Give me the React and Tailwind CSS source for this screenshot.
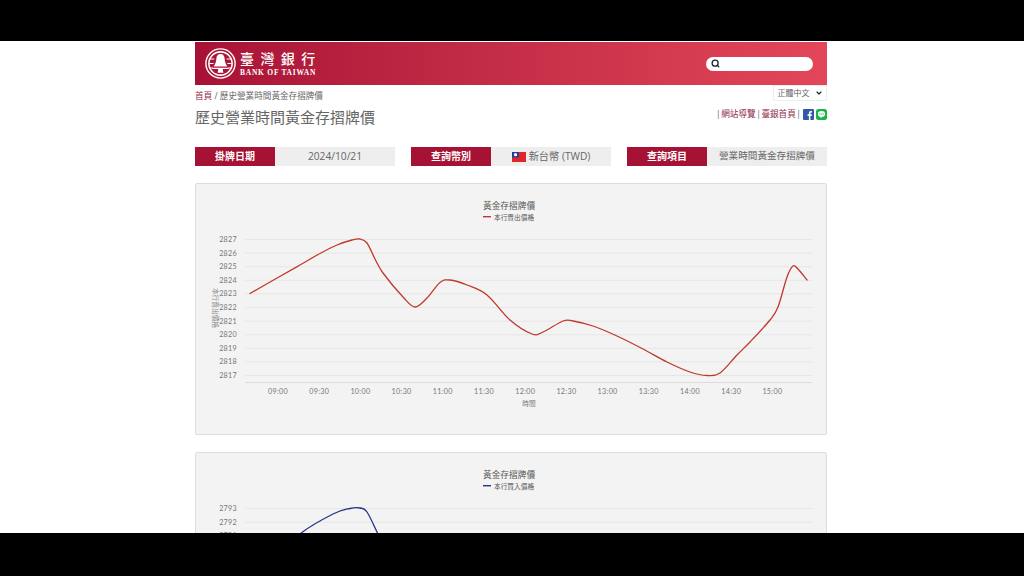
import { Search, ChevronDown } from 'lucide-react';

const yTicks1 = [2827, 2826, 2825, 2824, 2823, 2822, 2821, 2820, 2819, 2818, 2817];
const yTicks2 = [2793, 2792, 2791];
const xTicks = ['09:00', '09:30', '10:00', '10:30', '11:00', '11:30', '12:00', '12:30', '13:00', '13:30', '14:00', '14:30', '15:00'];

// traced from the picture, page coords minus the card origin (195, 183)
const sellLine = [
  [55, 110.5], [83, 94.5], [105, 82], [125, 70.5], [142, 62], [157, 57], [165, 56], [172, 60], [180, 76], [188, 90],
  [208, 114], [220, 124], [232, 115], [245, 99.5], [255, 97], [272, 102], [292, 112], [315, 137], [337, 151],
  [348, 149], [368, 138], [378, 138], [398, 143], [422, 153], [448, 166], [472, 179], [495, 189], [512, 192.5],
  [525, 190], [542, 172], [555, 159], [575, 137], [583, 124], [592, 94], [598, 83], [603, 86], [612, 97],
];
const buyLine = [
  [55, 126], [83, 108], [105, 82], [138, 62], [155, 56.5], [165, 56], [172, 60], [183, 82], [195, 106],
  [215, 125], [232, 116], [250, 100],
];

function smooth(pts) {
  let d = `M${pts[0][0]} ${pts[0][1]}`;
  for (let i = 0; i < pts.length - 1; i++) {
    const p0 = pts[i - 1] || pts[i];
    const p1 = pts[i];
    const p2 = pts[i + 1];
    const p3 = pts[i + 2] || p2;
    const c1x = p1[0] + (p2[0] - p0[0]) / 6;
    const c1y = p1[1] + (p2[1] - p0[1]) / 6;
    const c2x = p2[0] - (p3[0] - p1[0]) / 6;
    const c2y = p2[1] - (p3[1] - p1[1]) / 6;
    d += ` C${c1x} ${c1y} ${c2x} ${c2y} ${p2[0]} ${p2[1]}`;
  }
  return d;
}

function Chart({ legend, color, ticks, line, axis }) {
  return (
    <div className="h-[252px] rounded-[2px] border border-[#dddddd] bg-[#f3f3f3] shrink-0">
      <svg width="630" height="250" viewBox="1 1 630 250" className="block" style={{ fontFamily: '"Noto Sans CJK TC", sans-serif' }}>
        <text x="314" y="26" textAnchor="middle" fontSize="8.7" fill="#555">黃金存摺牌價</text>
        <rect x="288" y="33" width="8" height="1.4" fill={color} />
        <text x="299" y="36.5" fontSize="6.7" fill="#555">{legend}</text>

        {ticks.map((t, i) => {
          const y = 56.5 + i * 13.6;
          return (
            <g key={t}>
              <rect x="50" y={y - 0.5} width="567" height="1" fill="#e6e6e6" />
              <text x="42" y={y + 2.5} textAnchor="end" fontSize="7.2" letterSpacing="0.3" fill="#777" style={{ fontFamily: 'Lato, sans-serif' }}>{t}</text>
            </g>
          );
        })}

        {axis && (
          <g>
            <rect x="50" y="199" width="567" height="1" fill="#dcdcdc" />
            {xTicks.map((t, i) => (
              <text key={t} x={83 + i * 41.2} y="211" textAnchor="middle" fontSize="7.2" letterSpacing="0.3" fill="#777" style={{ fontFamily: 'Lato, sans-serif' }}>{t}</text>
            ))}
            <text x="334" y="223" textAnchor="middle" fontSize="6.7" fill="#777">時間</text>
            <text transform="translate(18 125) rotate(90)" textAnchor="middle" fontSize="6.7" fill="#888">{legend}</text>
          </g>
        )}

        <path d={smooth(line)} fill="none" stroke={color} strokeWidth="1.3" strokeLinejoin="round" strokeLinecap="round" />
      </svg>
    </div>
  );
}

function BankLogo() {
  return (
    <svg width="31" height="31" viewBox="0 0 31 31" className="shrink-0">
      <circle cx="15.5" cy="15.5" r="14.6" fill="none" stroke="#fff" strokeWidth="1.4" />
      <circle cx="15.5" cy="15.5" r="11.6" fill="none" stroke="#fff" strokeWidth="1.6" />
      <path d="M15.5 6c2.6 0 3.9 1.7 4.1 4.2.2 3 .9 5.7 2.7 8.3H8.7c1.8-2.6 2.5-5.3 2.7-8.3C11.6 7.7 12.9 6 15.5 6z" fill="#fff" />
      <path d="M7.2 19.7h16.6v1.4H7.2zM13.3 21.1h4.4l.7 3.6h-5.8z" fill="#fff" />
      <path d="M4.8 11h4.6M4.6 15.5h4M4.8 20h3M21.6 11h4.6M22.4 15.5h4M23.2 20h3" stroke="#fff" strokeWidth="1.1" fill="none" />
    </svg>
  );
}

function Flag() {
  return (
    <svg width="14" height="10" viewBox="0 0 14 10" className="shrink-0">
      <rect width="14" height="10" fill="#e0252b" />
      <rect width="7" height="5.4" fill="#1f3f9a" />
      <circle cx="3.5" cy="2.7" r="1.6" fill="#fff" />
    </svg>
  );
}

function Field({ label, children }) {
  return (
    <div className="flex h-[19px]">
      <div className="flex w-20 items-center justify-center bg-[#a51234] text-[10px] font-bold text-white">{label}</div>
      <div className="flex flex-1 items-center justify-center gap-[2px] bg-[#eeeeee] text-[10.2px] text-[#666]">{children}</div>
    </div>
  );
}

export default function App() {
  return (
    <div className="flex h-[576px] w-[1024px] flex-col overflow-hidden bg-black" style={{ fontFamily: '"Open Sans", "Noto Sans CJK TC", sans-serif' }}>
      <div className="h-[41px] shrink-0 bg-black" />

      <main className="min-h-0 flex-1 overflow-hidden bg-white">
        <div className="ml-[195px] w-[632px] pt-px">
          <header className="flex h-[43px] items-center justify-between bg-linear-to-r from-[#a81136] to-[#e34659] pl-[10px] pr-[14px]">
            <div className="flex items-center gap-[4px]">
              <BankLogo />
              <div className="text-white">
                <div className="whitespace-nowrap text-[14px] font-medium leading-[19px] tracking-[6.4px]" style={{ fontFamily: '"Noto Sans CJK TC", sans-serif' }}>臺灣銀行</div>
                <div className="whitespace-nowrap text-[7.5px] font-bold leading-[10px] tracking-[0.75px]" style={{ fontFamily: '"Liberation Serif", serif' }}>BANK OF TAIWAN</div>
              </div>
            </div>
            <div className="flex h-[14px] w-[107px] items-center rounded-full bg-white pl-[5px]">
              <Search size={9} strokeWidth={3.5} className="text-[#1a2530]" />
            </div>
          </header>

          <div className="flex items-start justify-between">
            <div className="pt-[5px] text-[8.6px] leading-[12px] text-[#666]">
              <span className="text-[#8e2b47]">首頁</span> / 歷史營業時間黃金存摺牌價
            </div>
            <div className="flex h-[16px] w-[54px] items-center justify-center gap-[5px] border border-[#eee] bg-white text-[8px] text-[#666]">
              正體中文
              <ChevronDown size={8} strokeWidth={3.5} className="text-[#222]" />
            </div>
          </div>

          <div className="flex items-start justify-between">
            <h1 className="mt-[4px] text-[15px] font-normal leading-[22px] text-[#666]">歷史營業時間黃金存摺牌價</h1>
            <div className="mt-[6px] flex items-center text-[8.6px] leading-[12px] text-[#8e2b47]">
              <span className="text-[#666]">|</span>
              <span className="mx-[0.5px]">網站導覽</span>
              <span className="text-[#666]">|</span>
              <span className="mx-[0.5px]">臺銀首頁</span>
              <span className="text-[#666]">|</span>
              <svg width="11" height="11" viewBox="0 0 11 11" className="ml-[2px]">
                <rect width="11" height="11" rx="1" fill="#2f5aa6" />
                <path d="M7.4 11V6.9h1.3l.2-1.6H7.4v-1c0-.5.2-.8.8-.8H9V2.1c-.2 0-.6-.1-1.1-.1C6.7 2 5.9 2.7 5.9 4.1v1.2H4.6v1.6h1.3V11z" fill="#fff" />
              </svg>
              <svg width="11" height="11" viewBox="0 0 11 11" className="ml-[2px]">
                <rect width="11" height="11" rx="2.5" fill="#19b24b" />
                <ellipse cx="5.5" cy="5.1" rx="3.6" ry="3" fill="#fff" />
                <path d="M4.4 7.6l.2 1.6 2-1.6z" fill="#fff" />
                <path d="M3.6 4.3v1.4M5 4.3v1.4M6.2 4.3v1.4M7.4 4.3v1.4" stroke="#19b24b" strokeWidth="0.6" />
              </svg>
            </div>
          </div>

          <div className="mt-[19px] grid grid-cols-3 gap-4">
            <Field label="掛牌日期">2024/10/21</Field>
            <Field label="查詢幣別">
              <Flag />
              <span className="ml-px">新台幣 (TWD)</span>
            </Field>
            <Field label="查詢項目">
              <span className="text-[9.6px]">營業時間黃金存摺牌價</span>
            </Field>
          </div>

          <div className="mt-[17px] flex flex-col gap-[17px]">
            <Chart legend="本行賣出價格" color="#c0392b" ticks={yTicks1} line={sellLine} axis />
            <Chart legend="本行買入價格" color="#27348b" ticks={yTicks2} line={buyLine} />
          </div>
        </div>
      </main>

      <div className="h-[43px] shrink-0 bg-black" />
    </div>
  );
}
